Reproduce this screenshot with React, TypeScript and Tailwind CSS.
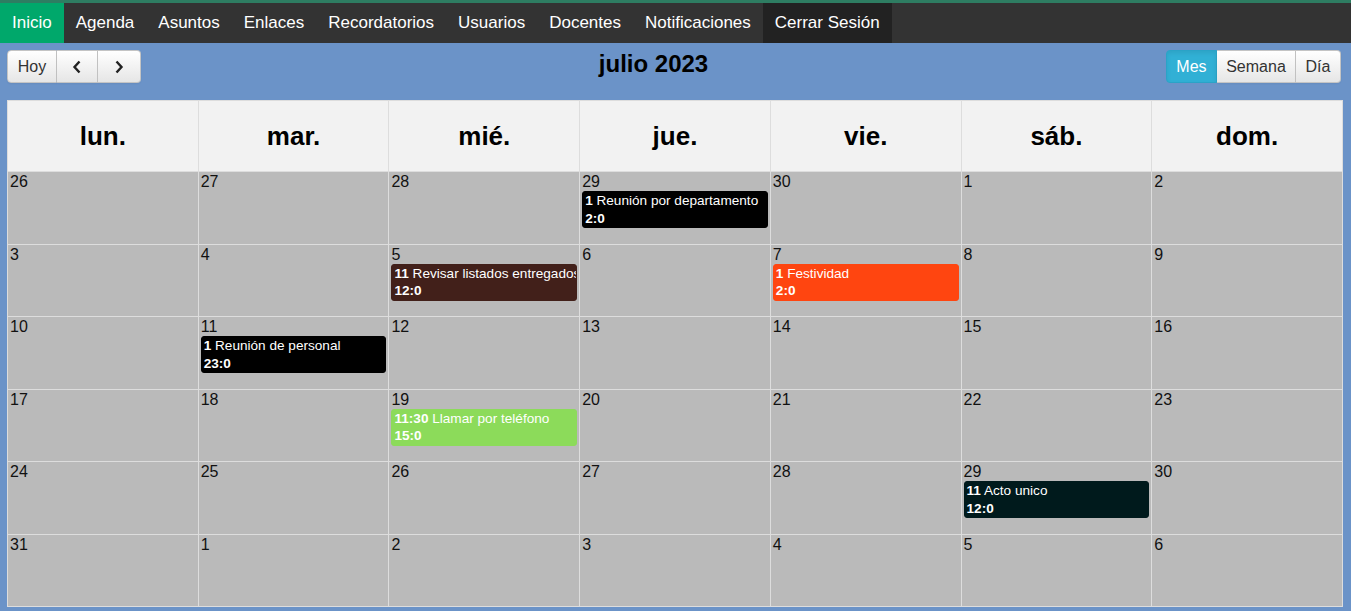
import React from 'react';

type CalEvent = {
  time: string;
  title: string;
  end: string;
  color: string;
};

const navItems = [
  { label: 'Inicio', active: true },
  { label: 'Agenda' },
  { label: 'Asuntos' },
  { label: 'Enlaces' },
  { label: 'Recordatorios' },
  { label: 'Usuarios' },
  { label: 'Docentes' },
  { label: 'Notificaciones' },
  { label: 'Cerrar Sesión', dark: true },
];

const dayNames = ['lun.', 'mar.', 'mié.', 'jue.', 'vie.', 'sáb.', 'dom.'];

const weeks = [
  [26, 27, 28, 29, 30, 1, 2],
  [3, 4, 5, 6, 7, 8, 9],
  [10, 11, 12, 13, 14, 15, 16],
  [17, 18, 19, 20, 21, 22, 23],
  [24, 25, 26, 27, 28, 29, 30],
  [31, 1, 2, 3, 4, 5, 6],
];

// keyed by "week-col"
const events: Record<string, CalEvent> = {
  '0-3': { time: '1', title: 'Reunión por departamento', end: '2:0', color: 'bg-black border-black' },
  '1-2': { time: '11', title: 'Revisar listados entregados', end: '12:0', color: 'bg-[#42201a] border-[#42201a]' },
  '1-4': { time: '1', title: 'Festividad', end: '2:0', color: 'bg-[#ff4510] border-[#ff4510]' },
  '2-1': { time: '1', title: 'Reunión de personal', end: '23:0', color: 'bg-black border-black' },
  '3-2': { time: '11:30', title: 'Llamar por teléfono', end: '15:0', color: 'bg-[#8cdb5a] border-[#8cdb5a]' },
  '4-5': { time: '11', title: 'Acto unico', end: '12:0', color: 'bg-[#001a1c] border-[#001a1c]' },
};

function Chevron({ dir }: { dir: 'left' | 'right' }) {
  return (
    <svg width="10" height="16" viewBox="0 0 10 16" className="text-[#222]">
      <polyline
        points={dir === 'left' ? '7.5,2.5 2.5,8 7.5,13.5' : '2.5,2.5 7.5,8 2.5,13.5'}
        fill="none"
        stroke="currentColor"
        strokeWidth="2.4"
      />
    </svg>
  );
}

const btn =
  'h-[33px] px-[10px] flex items-center justify-center text-[16px] text-[#333] border border-[#c4c4c4] bg-gradient-to-b from-[#ffffff] to-[#e6e6e6] shadow-[inset_0_1px_0_rgba(255,255,255,0.2),0_1px_2px_rgba(0,0,0,0.05)]';

export default function App() {
  return (
    <div className="min-h-screen bg-[#6b93c8] font-['Liberation_Sans',Arial,sans-serif]">
      <div className="h-[3px] bg-[#2e7d62]" />

      {/* Navbar */}
      <nav className="h-10 bg-[#333333] flex">
        {navItems.map((item) => (
          <a
            key={item.label}
            className={`px-3 flex items-center text-[17px] text-white ${
              item.active ? 'bg-[#00a86b]' : item.dark ? 'bg-[#222222]' : ''
            }`}
          >
            {item.label}
          </a>
        ))}
      </nav>

      {/* Toolbar */}
      <div className="flex justify-between items-start pl-[7px] pr-[10px] pt-[7px] pb-[17px]">
        <div className="flex">
          <button className={`${btn} rounded-l-[4px] w-[50px]`}>Hoy</button>
          <button className={`${btn} border-l-0 w-[41px]`}>
            <Chevron dir="left" />
          </button>
          <button className={`${btn} border-l-0 rounded-r-[4px] w-[43px]`}>
            <Chevron dir="right" />
          </button>
        </div>
        <h2 className="text-[24px] leading-[28px] font-bold text-black">julio 2023</h2>
        <div className="flex">
          <button className="h-[33px] w-[51px] flex items-center justify-center text-[16px] text-white bg-[#31b0d5] border border-[#2aa3c7] rounded-l-[4px] shadow-[inset_0_2px_4px_rgba(0,0,0,0.08)]">
            Mes
          </button>
          <button className={`${btn} border-l-0 w-[79px]`}>Semana</button>
          <button className={`${btn} border-l-0 rounded-r-[4px] w-[45px]`}>Día</button>
        </div>
      </div>

      {/* Calendar */}
      <div className="ml-[7px] mr-[8px] border-l border-t border-[#dddddd]">
        <div className="grid grid-cols-7 h-[71px] bg-[#f2f2f2]">
          {dayNames.map((d) => (
            <div
              key={d}
              className="border-r border-b border-[#dddddd] flex items-center justify-center text-[26px] font-bold text-black"
            >
              {d}
            </div>
          ))}
        </div>
        <div className="grid grid-rows-6 h-[435px] bg-[#bababa]">
          {weeks.map((week, wi) => (
            <div key={wi} className="grid grid-cols-7">
              {week.map((day, ci) => {
                const ev = events[`${wi}-${ci}`];
                return (
                  <div
                    key={ci}
                    className="border-r border-b border-[#dddddd] min-w-0 overflow-hidden"
                  >
                    <div className="px-[2px] text-[16px] leading-[19px] text-[#111]">{day}</div>
                    {ev && (
                      <div
                        className={`ml-[2px] mr-[2px] border rounded-[3px] px-[2px] text-white text-[13.6px] leading-[17.5px] whitespace-nowrap overflow-hidden ${ev.color}`}
                      >
                        <div>
                          <span className="font-bold">{ev.time}</span> {ev.title}
                        </div>
                        <div className="font-bold">{ev.end}</div>
                      </div>
                    )}
                  </div>
                );
              })}
            </div>
          ))}
        </div>
      </div>
    </div>
  );
}
